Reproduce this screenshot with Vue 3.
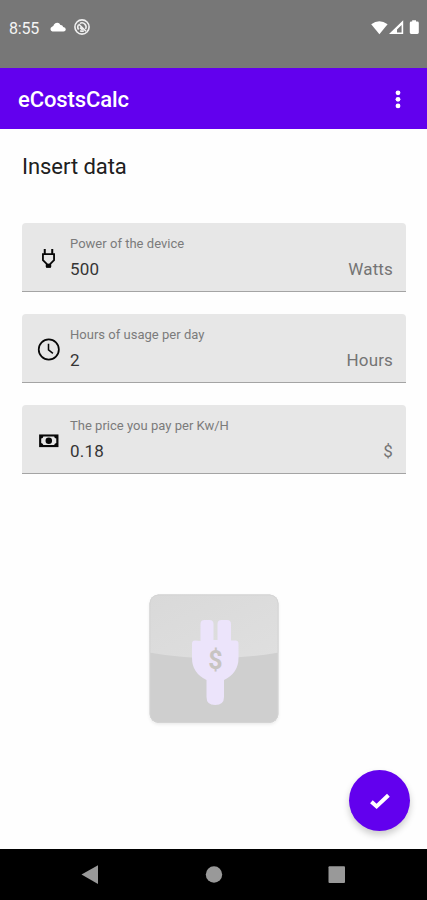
<script setup>
const fields = [
  { icon: 'plug', label: 'Power of the device', value: '500', unit: 'Watts' },
  { icon: 'clock', label: 'Hours of usage per day', value: '2', unit: 'Hours' },
  { icon: 'cash', label: 'The price you pay per Kw/H', value: '0.18', unit: '$' },
]
</script>

<template>
  <div class="screen">
    <header class="status">
      <span class="time">8:55</span>
      <svg class="cloud" width="16" height="10" viewBox="0 0 16 10"><path d="M2.4 9.4A2.4 2.4 0 0 1 2 4.8Q3.6 4.4 4 2.6A3.6 3.6 0 0 1 10.4 3Q12.6 2.8 13.2 5 15.8 5.4 15.8 7.4 15.6 9.4 13.5 9.4Z" fill="#fff" /></svg>
      <svg class="sync" width="16" height="16" viewBox="0 0 16 16" fill="none" stroke="#f0f0f0">
        <circle cx="8" cy="8" r="7.1" stroke-width="1.6" />
        <path d="M4.6 10.6A4.2 4.2 0 0 1 4.4 5.8M6 4.3A4.2 4.2 0 0 1 11.6 10M9.8 11.8A4.2 4.2 0 0 1 6.2 11.8" stroke-width="1.5" />
        <path d="M4.6 5 12 12.2M6 8.6 8.6 11" stroke-width="1.6" />
      </svg>
      <span class="spacer"></span>
      <svg class="system" width="50" height="16" viewBox="0 0 50 16" fill="#fff">
        <path d="M.2 4.2Q8.3-1.8 16.6 4.2L8.4 14.2Z" />
        <path fill-rule="evenodd" d="M18 14 32.2.2V14ZM26 12.6H30.6V5L26 9.4Z" />
        <path d="M41.2.3H45V1.5H46.4Q47.8 1.5 47.8 2.9V12.6Q47.8 14 46.4 14H40.2Q38.8 14 38.8 12.6V2.9Q38.8 1.5 40.2 1.5H41.2Z" />
      </svg>
    </header>

    <div class="appbar">
      <h1>eCostsCalc</h1>
      <svg width="6" height="20" viewBox="0 0 6 20" fill="#fff"><circle cx="3" cy="2.8" r="2.4" /><circle cx="3" cy="9.3" r="2.4" /><circle cx="3" cy="15.9" r="2.4" /></svg>
    </div>

    <main>
      <h2>Insert data</h2>
      <div class="fields">
        <label v-for="f in fields" :key="f.icon" class="field">
          <svg v-if="f.icon === 'plug'" class="icon" viewBox="0 0 24 24" fill="none" stroke="#080808">
            <path d="M8.1 2V8M15.9 2V8" stroke-width="2.1" />
            <path d="M6.2 7.4H17.8V13.6L13.9 17.6V20H10.1V17.6L6.2 13.6Z" stroke-width="1.9" />
            <path d="M12 17.4V21.8" stroke-width="5" />
          </svg>
          <svg v-else-if="f.icon === 'clock'" class="icon" viewBox="0 0 24 24" fill="none" stroke="#080808">
            <circle cx="12.3" cy="12" r="10.5" stroke-width="1.8" />
            <path d="M12 6V12.4L16.6 16" stroke-width="1.6" />
          </svg>
          <svg v-else class="icon" viewBox="0 0 24 24">
            <path d="M2.2 5.7H22.4V18.9H2.2Z" fill="#080808" />
            <path d="M6.6 7.7H17.9Q18.2 9.6 20.1 9.9V14.6Q18.2 14.9 17.9 16.8H6.6Q6.3 14.9 4.4 14.6V9.9Q6.3 9.6 6.6 7.7Z" fill="#e7e7e7" />
            <circle cx="12.3" cy="12.2" r="3.4" fill="#080808" />
          </svg>
          <span class="copy">
            <span class="caption">{{ f.label }}</span>
            <span class="value">{{ f.value }}</span>
          </span>
          <span class="unit">{{ f.unit }}</span>
        </label>
      </div>

      <svg class="logo" width="141" height="141" viewBox="143 588 141 141">
        <defs>
          <linearGradient id="gloss" x1="0" y1="0" x2="1" y2="1"><stop offset="0" stop-color="#d9d9d9" /><stop offset="1" stop-color="#dfdfdf" /></linearGradient>
          <filter id="shade" x="-10%" y="-10%" width="120%" height="120%"><feDropShadow dx="0" dy="1.5" stdDeviation="1.5" flood-opacity=".08" /></filter>
          <clipPath id="tile"><rect x="149.5" y="594.5" width="129" height="128.5" rx="9" /></clipPath>
        </defs>
        <rect x="149.5" y="594.5" width="129" height="128.5" rx="9" fill="#cfcfcf" filter="url(#shade)" />
        <g clip-path="url(#tile)">
          <path d="M149 594H279V652.5Q214 664 149 652.5Z" fill="url(#gloss)" />
          <rect x="150" y="595" width="128" height="127.5" rx="8.5" fill="none" stroke="#d4d4d4" />
        </g>
        <path d="M200.5 641V624Q200.5 620 204.5 620H209.5Q213.5 620 213.5 624V640H217.5V624Q217.5 620 221.5 620H227Q231 620 231 624V640.5H235.5Q238.5 640.5 238.5 643.5V658Q238.5 673 224 680V697Q224 705 215.2 705T206.5 697V680Q192 673 192 658V643.5Q192 640.5 195 640.5Z" fill="#ece4fb" />
        <text x="215.4" y="668.6" text-anchor="middle" class="dollar">$</text>
      </svg>
      <button class="fab" aria-label="Calculate">
        <svg width="24" height="24" viewBox="0 0 24 24" fill="none"><path d="M3.4 12.8 8.6 17.4 20.4 6.2" stroke="#fff" stroke-width="4" /></svg>
      </button>
    </main>

    <nav>
      <svg width="427" height="51" viewBox="0 0 427 51" fill="#999">
        <path d="M81.5 25.5 98 16.2V35Z" />
        <circle cx="214" cy="25.5" r="8.2" />
        <rect x="328.5" y="17.2" width="16.5" height="16.7" rx="1" />
      </svg>
    </nav>
  </div>
</template>

<style>
body { margin: 0; background: #fff; }
</style>

<style scoped>
.screen { width: 427px; height: 900px; display: flex; flex-direction: column; overflow: hidden; background: #fefefe; font-family: Roboto, sans-serif; }
.status { height: 68px; flex: none; box-sizing: border-box; padding: 19px 7px 0 9px; display: flex; align-items: flex-start; background: #777; color: #f4f4f4; }
.time { width: 41px; font-size: 16px; line-height: 20px; letter-spacing: -0.2px; }
.cloud { margin-top: 3px; }
.sync { margin-left: 8px; }
.spacer { flex: 1; }
.system { margin-top: 1px; margin-right: -1px; }
.appbar { height: 60.5px; flex: none; box-sizing: border-box; padding: 4px 26.5px 0 18px; display: flex; align-items: center; justify-content: space-between; background: #6200ee; }
h1 { margin: 0; font-size: 22px; line-height: 28px; font-weight: 500; letter-spacing: -0.1px; color: #fff; }
main { position: relative; flex: 1; display: flex; flex-direction: column; align-items: center; padding: 0 21px 0 22px; }
h2 { align-self: flex-start; margin: 24px 0 42.5px; font-size: 22px; line-height: 28px; font-weight: 400; letter-spacing: -0.05px; color: #202020; }
.fields { width: 100%; display: grid; gap: 22px; }
.field { height: 69px; box-sizing: border-box; display: flex; border-bottom: 1px solid #a4a4a4; border-radius: 4px 4px 0 0; background: #e7e7e7; padding: 0 13px 0 15px; }
.icon { width: 23px; height: 23px; margin: 24px 10px 0 0; flex: none; }
.copy { flex: 1; display: flex; flex-direction: column; padding-top: 13px; }
.caption { font-size: 13px; line-height: 16px; letter-spacing: 0.02px; color: #7b7b7b; }
.value { margin-top: 6px; font-size: 17px; line-height: 22px; letter-spacing: 0.2px; color: #353535; }
.unit { padding-top: 35px; font-size: 17px; line-height: 22px; letter-spacing: 0.15px; color: #747474; }
.logo { margin: 113.5px 2px 0 0; flex: none; }
.dollar { font: 700 25px Roboto, sans-serif; fill: #c8c4c2; }
.fab { position: absolute; right: 17px; bottom: 18px; width: 61px; height: 61px; border: 0; border-radius: 50%; padding: 0; display: grid; place-items: center; background: #6200ee; box-shadow: 0 4px 7px rgba(0, 0, 0, .2); }
nav { height: 51px; flex: none; background: #000; }
nav svg { display: block; }
</style>
